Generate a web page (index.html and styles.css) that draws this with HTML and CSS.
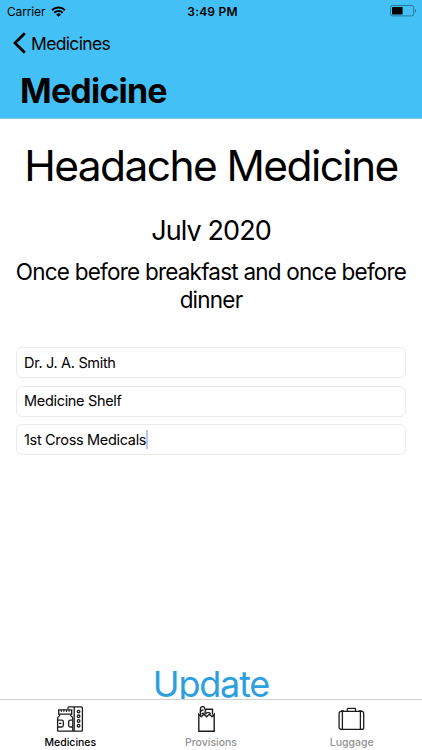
FILE: index.html
```
<!DOCTYPE html>
<html lang="en">
<head>
  <meta charset="UTF-8" />
  <meta name="viewport" content="width=device-width, initial-scale=1.0">
  <title>Medicine</title>
  <link rel="stylesheet" href="styles.css">
</head>
<body>
  <header class="header">
    <div class="status">
      <div class="carrier">
        <span>Carrier</span>
        <svg width="15" height="11" viewBox="0 0 15 11" fill="none" stroke="#000" stroke-width="2">
          <path d="M1 4.2a9.2 9.2 0 0 1 13 0M3.3 6.7a6 6 0 0 1 8.4 0" />
          <path d="M7.5 10.7L5.1 8.4a3.4 3.4 0 0 1 4.8 0z" fill="#000" stroke="none" />
        </svg>
      </div>
      <span class="time">3:49 PM</span>
      <svg class="battery" width="27" height="12" viewBox="0 0 27 12">
        <rect x="0.5" y="0.5" width="23.2" height="10.4" rx="2" fill="none" stroke="#26789c" />
        <rect x="2" y="2" width="10.6" height="7.4" rx="0.6" />
        <path d="M25 4v3.5c1.6-.5 1.6-3 0-3.5z" fill="#26789c" />
      </svg>
    </div>
    <a class="back" href="#">
      <svg width="13" height="22" viewBox="0 0 13 22" fill="none" stroke="#000" stroke-width="2.8">
        <path d="M11.8 1.2L2 11l9.8 9.8" />
      </svg>
      <span>Medicines</span>
    </a>
    <h1>Medicine</h1>
  </header>

  <main class="content">
    <h2 class="name">Headache Medicine</h2>
    <p class="expiry">July 2020</p>
    <p class="dosage">Once before breakfast and once before dinner</p>
    <div class="fields">
      <div class="field"><span>Dr. J. A. Smith</span></div>
      <div class="field"><span>Medicine Shelf</span></div>
      <div class="field"><span>1st Cross Medicals</span><i class="caret"></i></div>
    </div>
    <button class="update">Update</button>
  </main>

  <nav class="tabs">
    <a class="tab active" href="#">
      <svg width="28" height="28" viewBox="0 0 28 28" fill="none" stroke="#1c1c1c" stroke-width="1.3">
        <path d="M12 3V1.900c0-.6.4-1 1-1h12.400c.7 0 1 .4 1 1v22.300c0 .6-.3 1-1 1H16.500M18.200 1v24" />
        <path d="M2.700 3.800h13v4.400h-13z" />
        <path d="M5.300 3.800v2.200M7.900 3.800v2.200M10.500 3.800v2.200M13.100 3.800v2.200" stroke-width="1" />
        <path d="M3.600 8.300v1.500C2.200 10.600 1.600 11.300 1.600 12.600v11.600c0 .7.300 1 1 1h13.200c.7 0 1-.3 1-1V12.600c0-1.300-.6-2-2-2.800V8.300" />
        <path d="M1.600 14.200h4.200c1 0 1.500.5 1.500 1.500v3.800c0 1-.5 1.500-1.500 1.500H1.600M16.700 14.200h-2.500c-1 0-1.500.5-1.500 1.500v3.800c0 1 .5 1.500 1.500 1.500h2.500M3 17.300h2.400" />
        <circle cx="22.600" cy="5.600" r="1.300" />
        <circle cx="22.600" cy="10.300" r="1.300" />
        <circle cx="22.600" cy="15" r="1.300" />
        <circle cx="22.600" cy="19.700" r="1.300" />
      </svg>
      <span>Medicines</span>
    </a>
    <a class="tab" href="#">
      <svg width="28" height="28" viewBox="0 0 28 28" fill="none" stroke="#1c1c1c" stroke-width="1.400">
        <path d="M1.800 8.300v17h15.400v-17l-2.200 2.400-2.700-2.400-2.700 2.400-2.700-2.400-2.600 2.400z" />
        <path d="M3.400 9.800V3C3.400-.1 7.600-.1 7.700 2.800c1.300 1 1.100 2.100.4 2.800v3M4 5.200l2.500-1.500M4.600 8l2.200-1.200" />
        <path d="M8.500 3.300h7v5.200M8.900 8c1-2.200 3.300-2.200 4.700 0" />
      </svg>
      <span>Provisions</span>
    </a>
    <a class="tab" href="#">
      <svg width="28" height="28" viewBox="0 0 28 28" fill="none" stroke="#1c1c1c" stroke-width="1.300">
        <rect x="1.100" y="5.400" width="24.600" height="18" rx="2" />
        <path d="M9.300 5.200V3.100c0-.4.300-.7.700-.7h6.800c.4 0 .7.300.7.700v2.100M4.400 5.500v17.900M22.400 5.500v17.900M3 4.800h3M20.800 4.800h3" />
      </svg>
      <span>Luggage</span>
    </a>
  </nav>
</body>
</html>
```

FILE: styles.css
```
* {
  box-sizing: border-box;
}

body {
  margin: 0;
  height: 750px;
  display: flex;
  flex-direction: column;
  overflow: hidden;
  background: #fff;
  color: #000;
  font-family: Inter, "Liberation Sans", sans-serif;
}

h1, h2, p {
  margin: 0;
  font-weight: 400;
}

a {
  color: inherit;
  text-decoration: none;
}

svg {
  display: block;
}

.header {
  height: 119px;
  flex-shrink: 0;
  background: #43c0f5;
  border-bottom: 1px solid #8fc4dc;
}

.status {
  height: 22px;
  display: grid;
  grid-template-columns: 1fr auto 1fr;
  align-items: center;
  padding: 0 5px 0 7px;
  font-size: 12px;
}

.carrier {
  display: flex;
  align-items: center;
  gap: 6px;
  letter-spacing: -0.15px;
}

.time {
  padding-left: 1px;
  font-weight: 600;
  letter-spacing: 0.2px;
}

.battery {
  justify-self: end;
}

.back {
  height: 42px;
  display: flex;
  align-items: center;
  gap: 5px;
  padding-left: 13px;
  font-size: 17.5px;
  letter-spacing: -0.65px;
}

.header h1 {
  padding-left: 20px;
  font-size: 34px;
  line-height: 53px;
  font-weight: 700;
  letter-spacing: -0.8px;
}

.content {
  flex: 1;
  min-height: 0;
  overflow: hidden;
  display: flex;
  flex-direction: column;
  padding: 21px 16px 0;
  text-align: center;
}

.name {
  font-size: 42.5px;
  line-height: 51px;
  letter-spacing: -1.6px;
  white-space: nowrap;
}

/* fixed height label, cuts off descenders */
.expiry {
  height: 23px;
  margin-top: 27px;
  overflow: hidden;
  font-size: 27px;
  line-height: 26px;
  letter-spacing: -0.9px;
}

.dosage {
  margin: 17px -6px 0;
  font-size: 22.5px;
  line-height: 28px;
  letter-spacing: -0.78px;
}

.fields {
  display: grid;
  gap: 7.5px;
  margin-top: 33px;
}

.field {
  height: 31px;
  display: flex;
  align-items: center;
  padding: 0 7px 1px;
  border: 1px solid #ebebeb;
  border-radius: 6px;
  font-size: 14.5px;
  letter-spacing: -0.32px;
}

.caret {
  width: 2px;
  height: 19px;
  background: #b9c8f3;
}

.update {
  margin-top: auto;
  margin-bottom: -6px;
  padding: 0;
  border: 0;
  background: none;
  color: #2d9fe0;
  font: inherit;
  font-size: 36px;
  line-height: 42px;
  letter-spacing: -1.2px;
}

.tabs {
  height: 51px;
  flex-shrink: 0;
  display: grid;
  grid-template-columns: repeat(3, 1fr);
  background: #fff;
  border-top: 1px solid #d0d0d0;
}

.tab {
  display: flex;
  flex-direction: column;
  align-items: center;
  padding-top: 6px;
  color: #929292;
  font-size: 10.5px;
  line-height: 18px;
  font-weight: 500;
}

.tab.active {
  color: #000;
}
```
